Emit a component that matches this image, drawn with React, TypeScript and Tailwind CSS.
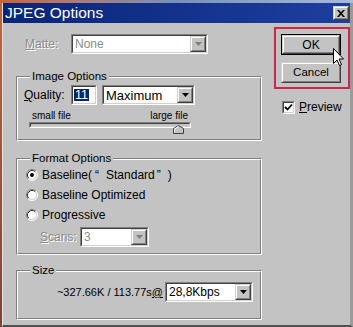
import React from "react";

function Sunken({ className = "", inner = "", children }: { className?: string; inner?: string; children?: React.ReactNode }) {
  return (
    <div className={`border border-t-[#808080] border-l-[#808080] border-b-white border-r-white ${className}`}>
      <div className={`h-full w-full border border-t-[#404040] border-l-[#404040] border-b-[#d4d0c8] border-r-[#d4d0c8] ${inner}`}>{children}</div>
    </div>
  );
}

function Raised({ className = "", children }: { className?: string; children?: React.ReactNode }) {
  return (
    <div className={`border border-t-[#d4d0c8] border-l-[#d4d0c8] border-b-[#404040] border-r-[#404040] ${className}`}>
      <div className="h-full w-full border border-t-white border-l-white border-b-[#808080] border-r-[#808080] bg-[#c3c3c3] flex items-center justify-center">
        {children}
      </div>
    </div>
  );
}

function Arrow({ disabled = false }: { disabled?: boolean }) {
  return (
    <svg width="7" height="4" viewBox="0 0 7 4" className="block">
      <path d="M0 0h7L3.5 4z" fill={disabled ? "#808080" : "#000"} />
    </svg>
  );
}

function Combo({ className, text, disabled = false, textClass = "text-[12px]" }: { className: string; text: string; disabled?: boolean; textClass?: string }) {
  return (
    <Sunken className={className} inner="bg-white flex items-center">
      <span className={`flex-1 pl-[2px] leading-none ${textClass} ${disabled ? "text-[#8c8c8c]" : "text-black"}`}>{text}</span>
      <Raised className="w-[16px] h-full">
        <Arrow disabled={disabled} />
      </Raised>
    </Sunken>
  );
}

function Group({ title, className, children }: { title: string; className: string; children?: React.ReactNode }) {
  return (
    <div className={`relative border border-t-[#808080] border-l-[#808080] border-b-white border-r-white ${className}`}>
      <div className="h-full border border-t-white border-l-white border-b-[#808080] border-r-[#808080]">{children}</div>
      <span className="absolute left-[13px] top-[-8px] bg-[#c3c3c3] px-[2px] text-[11.5px] leading-[14px] text-black">{title}</span>
    </div>
  );
}

function Radio({ checked = false }: { checked?: boolean }) {
  return (
    <svg width="12" height="12" viewBox="0 0 12 12" className="block shrink-0">
      <circle cx="6" cy="6" r="5" fill="#fff" />
      <path d="M2.11 9.89 A5.5 5.5 0 0 1 9.89 2.11" fill="none" stroke="#808080" strokeWidth="1" />
      <path d="M9.89 2.11 A5.5 5.5 0 0 1 2.11 9.89" fill="none" stroke="#ffffff" strokeWidth="1" />
      <path d="M2.82 9.18 A4.5 4.5 0 0 1 9.18 2.82" fill="none" stroke="#303030" strokeWidth="1" />
      <path d="M9.18 2.82 A4.5 4.5 0 0 1 2.82 9.18" fill="none" stroke="#d4d0c8" strokeWidth="1" />
      {checked && <circle cx="6" cy="6" r="2" fill="#000" />}
    </svg>
  );
}

export default function App() {
  const dis = "text-[#8c8c8c] [text-shadow:1px_1px_0_#ffffff]";
  return (
    <div className="w-[353px] h-[327px] overflow-hidden bg-[#c3c3c3] relative font-['Liberation_Sans',Arial,sans-serif] text-black">
      <div className="h-[3px] bg-gradient-to-r from-[#c8643a] via-[#7890b8] to-[#a8bcd8]" />
      <div className="flex h-[324px]">
        <div className="w-[2px] bg-gradient-to-b from-[#c4643c] to-[#7a4436]" />
        <div className="flex-1 flex flex-col border-l border-l-[#e4e4e4] border-r-[3px] border-r-[#9a9a9a] border-b-2 border-b-[#505050]">
          {/* Title bar */}
          <div className="h-[20px] flex items-center justify-between bg-gradient-to-r from-[#0a2478] to-[#1e3fa0] pl-[2px] pr-[1px]">
            <span className="text-white text-[15.5px] leading-none">JPEG Options</span>
            <Raised className="w-[16px] h-[14px]">
              <svg width="8" height="7" viewBox="0 0 8 7" className="block">
                <path d="M0 0h2l2 2.2L6 0h2L5 3.5 8 7H6L4 4.8 2 7H0l3-3.5z" fill="#000" />
              </svg>
            </Raised>
          </div>

          {/* Content */}
          <div className="flex flex-1">
            <div className="pl-[13px] w-[259px] flex flex-col">
              <div className="mt-[11px] h-[20px] flex items-center">
                <span className={`ml-[9px] w-[46px] text-[12px] ${dis}`}>
                  <u>M</u>atte:
                </span>
                <Combo className="w-[137px] h-[20px]" text="None" disabled textClass="text-[12px]" />
              </div>

              <Group title="Image Options" className="mt-[22px] h-[65px]">
                <div className="pt-[7px] pl-[6px] flex items-center h-[27px]">
                  <span className="w-[47px] text-[12px]">
                    <u>Q</u>uality:
                  </span>
                  <Sunken className="w-[26px] h-[20px]" inner="bg-white flex items-center pl-[1px]">
                    <span className="bg-[#0a246a] text-white text-[12.5px] leading-[12px] px-[1px]">11</span>
                  </Sunken>
                  <Combo className="ml-[5px] w-[93px] h-[20px]" text="Maximum" textClass="text-[13px]" />
                </div>
                <div className="mt-[5px] ml-[14px] w-[156px] flex justify-between text-[10px] leading-[11px]">
                  <span>small file</span>
                  <span>large file</span>
                </div>
                <div className="relative mt-[1px] ml-[11px] w-[162px] h-[6px]">
                  <Sunken className="w-[162px] h-[6px]" inner="bg-[#c3c3c3]" />
                  <svg width="11" height="9" viewBox="0 0 11 9" className="absolute left-[144px] top-[3px]">
                    <path d="M0.5 8.5V3.5L5.5 0.5L10.5 3.5V8.5Z" fill="#c3c3c3" stroke="#404040" />
                    <path d="M1.5 7.5V4L5.5 1.6" fill="none" stroke="#fff" />
                  </svg>
                </div>
              </Group>

              <Group title="Format Options" className="mt-[17px] h-[97px]">
                <div className="pt-[5px] pl-[8px] flex flex-col text-[12px]">
                  <div className="h-[20px] flex items-center gap-[4px]">
                    <Radio checked />
                    <span className="whitespace-nowrap flex items-baseline">
                      Baseline(<span className="inline-block w-[13px] pl-[3px]">“</span>
                      <span className="ml-[1px]">Standard</span>
                      <span className="inline-block w-[13px] pl-[2px]">”</span>)
                    </span>
                  </div>
                  <div className="h-[20px] flex items-center gap-[4px]">
                    <Radio />
                    <span>Baseline Optimized</span>
                  </div>
                  <div className="h-[20px] flex items-center gap-[4px]">
                    <Radio />
                    <span>Progressive</span>
                  </div>
                  <div className="mt-[2px] h-[20px] flex items-center">
                    <span className={`ml-[14px] w-[40px] ${dis}`}>
                      <u>S</u>cans:
                    </span>
                    <Combo className="w-[69px] h-[20px]" text="3" disabled />
                  </div>
                </div>
              </Group>

              <Group title="Size" className="mt-[15px] h-[50px]">
                <div className="pt-[10px] flex items-center">
                  <span className="w-[145px] text-right text-[11px] whitespace-nowrap">
                    ~327.66K / 113.77s<u>@</u>
                  </span>
                  <Combo className="ml-[2px] w-[88px] h-[20px]" text="28,8Kbps" />
                </div>
              </Group>
            </div>

            <div className="ml-[12px] flex flex-col">
              <div className="mt-[4px] w-[76px] h-[62px] border-2 border-[#c8284a] pt-[5px] pl-[5px] flex flex-col gap-[7px]">
                <div className="w-[60px] h-[21px] border border-black">
                  <Raised className="w-full h-full">
                    <span className="text-[12px] leading-none">OK</span>
                  </Raised>
                </div>
                <Raised className="w-[60px] h-[21px]">
                  <span className="text-[11.5px] leading-none">Cancel</span>
                </Raised>
              </div>
              <div className="mt-[9px] ml-[8px] flex items-center gap-[4px]">
                <Sunken className="w-[13px] h-[13px]" inner="bg-white">
                  <svg width="9" height="9" viewBox="0 0 9 9" className="block">
                    <path d="M1 4 L3.5 6.5 L8 1.5" fill="none" stroke="#000" strokeWidth="1.8" />
                  </svg>
                </Sunken>
                <span className="text-[12px]">
                  <u>P</u>review
                </span>
              </div>
            </div>
          </div>
        </div>
      </div>

      {/* Mouse cursor */}
      <svg width="12" height="19" viewBox="0 0 12 19" className="absolute left-[333px] top-[48px]">
        <path d="M0.5 0.5V15.5L4 12L6.5 17.5L8.5 16.5L6 11H10.5Z" fill="#fff" stroke="#000" strokeWidth="1" />
      </svg>
    </div>
  );
}
